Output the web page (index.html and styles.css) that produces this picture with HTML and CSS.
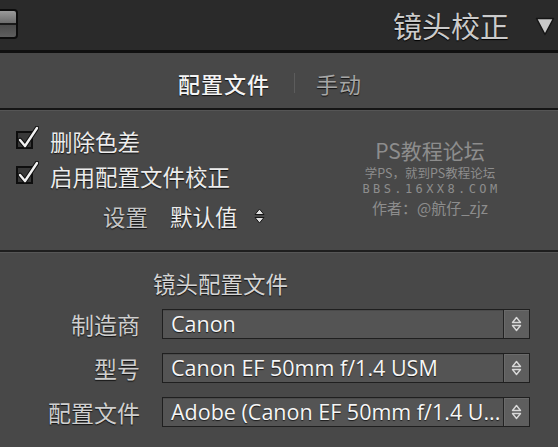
FILE: index.html
```html
<!DOCTYPE html>
<html lang="zh-CN">
<head>
    <meta charset="UTF-8">
    <title>镜头校正</title>
    <link rel="stylesheet" href="styles.css">
</head>
<body>
    <div class="panel">
        <header class="panel-head">
            <span class="head-icon"><span class="head-icon-line"></span></span>
            <h1 class="head-title">镜头校正</h1>
            <svg class="head-arrow" width="20" height="20" viewBox="0 0 20 20">
                <path d="M1.5 2.5 H18.5 L10 18.5 Z" fill="#c9c9c9" stroke="#151515" stroke-width="1.5" stroke-linejoin="round"/>
            </svg>
        </header>

        <nav class="tabs">
            <span class="tab active">配置文件</span>
            <span class="tab-sep"></span>
            <span class="tab">手动</span>
        </nav>

        <section class="options">
            <label class="check">
                <svg class="check-box" width="24" height="24" viewBox="0 0 24 24">
                    <rect x="2" y="6" width="15" height="16" fill="#383838" stroke="#0e0e0e" stroke-width="2"/>
                    <path d="M5 14 L10 20 L22 2" fill="none" stroke="#111" stroke-width="4.5" stroke-linecap="round" stroke-linejoin="round"/>
                    <path d="M5 14 L10 20 L22 2" fill="none" stroke="#f2f2f2" stroke-width="2.4" stroke-linecap="round" stroke-linejoin="round"/>
                </svg>
                删除色差
            </label>
            <label class="check">
                <svg class="check-box" width="24" height="24" viewBox="0 0 24 24">
                    <rect x="2" y="6" width="15" height="16" fill="#383838" stroke="#0e0e0e" stroke-width="2"/>
                    <path d="M5 14 L10 20 L22 2" fill="none" stroke="#111" stroke-width="4.5" stroke-linecap="round" stroke-linejoin="round"/>
                    <path d="M5 14 L10 20 L22 2" fill="none" stroke="#f2f2f2" stroke-width="2.4" stroke-linecap="round" stroke-linejoin="round"/>
                </svg>
                启用配置文件校正
            </label>
            <div class="setup">
                <span class="setup-label">设置</span>
                <span class="setup-value">默认值</span>
                <svg class="updown" width="11" height="16" viewBox="0 0 11 16">
                    <path d="M5.5 1 L10 6.5 H1 Z M5.5 15 L10 9.5 H1 Z" fill="#e0e0e0" stroke="#161616" stroke-width="1" stroke-linejoin="round"/>
                </svg>
            </div>

            <div class="watermark">
                <div class="wm-title">PS教程论坛</div>
                <div class="wm-sub">学PS，就到PS教程论坛</div>
                <div class="wm-url">BBS.16XX8.COM</div>
                <div class="wm-author">作者：@航仔_zjz</div>
            </div>
        </section>

        <section class="lens">
            <h2 class="lens-title">镜头配置文件</h2>

            <div class="field">
                <span class="field-label">制造商</span>
                <div class="select">
                    <span class="select-text">Canon</span>
                    <span class="select-btn">
                        <svg width="11" height="16" viewBox="0 0 11 16"><path d="M5.5 1.5 L9.5 6.5 H1.5 Z M5.5 14.5 L9.5 9.5 H1.5 Z" fill="none" stroke="#d8d8d8" stroke-width="1.4" stroke-linejoin="round"/></svg>
                    </span>
                </div>
            </div>
            <div class="field">
                <span class="field-label">型号</span>
                <div class="select">
                    <span class="select-text">Canon EF 50mm f/1.4 USM</span>
                    <span class="select-btn">
                        <svg width="11" height="16" viewBox="0 0 11 16"><path d="M5.5 1.5 L9.5 6.5 H1.5 Z M5.5 14.5 L9.5 9.5 H1.5 Z" fill="none" stroke="#d8d8d8" stroke-width="1.4" stroke-linejoin="round"/></svg>
                    </span>
                </div>
            </div>
            <div class="field">
                <span class="field-label">配置文件</span>
                <div class="select">
                    <span class="select-text">Adobe (Canon EF 50mm f/1.4 U...</span>
                    <span class="select-btn">
                        <svg width="11" height="16" viewBox="0 0 11 16"><path d="M5.5 1.5 L9.5 6.5 H1.5 Z M5.5 14.5 L9.5 9.5 H1.5 Z" fill="none" stroke="#d8d8d8" stroke-width="1.4" stroke-linejoin="round"/></svg>
                    </span>
                </div>
            </div>
        </section>
    </div>
</body>
</html>
```

FILE: styles.css
```css
html, body { margin: 0; padding: 0; }
body { background: #474747; font-family: "Noto Sans CJK SC", "Noto Sans", sans-serif; overflow: hidden; }
.panel { width: 558px; height: 447px; background: #484848; }

/* header */
.panel-head { height: 50px; background: #2a2a2a; border-bottom: 3px solid #101010; display: flex; align-items: center; }
.head-icon { width: 26px; height: 26px; margin-left: -12px; margin-top: -2px; border: 2px solid #0c0c0c; border-radius: 4px; background: linear-gradient(#9a9a9a, #6a6a6a 48%, #4a4a4a 52%, #5e5e5e); }
.head-icon-line { display: block; height: 2px; background: #1a1a1a; margin-top: 12px; }
.head-title { margin: 0 26px 0 auto; font-size: 29px; font-weight: 400; color: #cbcbcb; line-height: 50px; text-shadow: 0 1px 1px #000; }
.head-arrow { margin-right: 3px; margin-top: 2px; }

/* tabs */
.tabs { height: 57px; display: flex; align-items: center; justify-content: center; border-bottom: 2px solid #151515; box-shadow: 0 1px 0 #555; padding: 4px 18px 0 0; box-sizing: border-box; }
.tab { font-size: 22px; color: #a6a6a6; text-shadow: 0 1px 1px #111; letter-spacing: 1px; }
.tab.active { color: #f4f4f4; font-weight: 500; }
.tab-sep { width: 1px; height: 20px; background: #5c5c5c; margin: 0 21px 0 24px; }

/* options */
.options { position: relative; height: 142px; padding: 13px 0 0 15px; box-sizing: border-box; border-bottom: 2px solid #1e1e1e; box-shadow: 0 1px 0 #565656; }
.check { display: flex; align-items: center; height: 35px; font-size: 22.5px; color: #ececec; text-shadow: 0 1px 1px #111; }
.check-box { margin-right: 11px; margin-top: -6px; }
.setup { display: flex; align-items: center; height: 40px; margin-left: 88px; margin-top: 3px; font-size: 22.5px; text-shadow: 0 1px 1px #111; }
.setup-label { color: #c4c4c4; margin-right: 22px; }
.setup-value { color: #ececec; margin-right: 16px; }

.watermark { position: absolute; left: 351px; top: 30px; width: 158px; text-align: center; color: #8d8d8d; }
.wm-title { font-size: 21px; line-height: 21px; margin-bottom: 4px; }
.wm-sub { font-size: 12.5px; line-height: 16px; }
.wm-url { font-family: "DejaVu Sans Mono", monospace; font-size: 12px; line-height: 17px; letter-spacing: 3.4px; padding-left: 3px; }
.wm-author { font-size: 15px; line-height: 19px; }

/* lens profile */
.lens { padding-top: 16px; }
.lens-title { margin: 0 0 11px 153px; font-size: 22.5px; font-weight: 400; line-height: 30px; color: #d4d4d4; text-shadow: 0 1px 1px #111; }
.field { display: flex; align-items: center; height: 30px; margin-bottom: 14px; }
.field-label { width: 140px; text-align: right; font-size: 23px; line-height: 30px; color: #cfcfcf; text-shadow: 0 1px 1px #111; margin-right: 22px; }
.select { width: 368px; height: 30px; display: flex; border: 1px solid #1f1f1f; background: #545454; box-sizing: border-box; box-shadow: inset 0 1px 0 #4a4a4a; }
.select-text { flex: 1; min-width: 0; padding-left: 8px; font-family: "Open Sans", "Liberation Sans", sans-serif; font-size: 21.5px; line-height: 28px; color: #f6f6f6; white-space: nowrap; overflow: hidden; text-shadow: 0 1px 1px #1a1a1a; }
.select-btn { width: 25px; display: flex; align-items: center; justify-content: center; background: #5e5e5e; border-left: 1px solid #222; box-shadow: inset 1px 1px 0 #6a6a6a; }
```
